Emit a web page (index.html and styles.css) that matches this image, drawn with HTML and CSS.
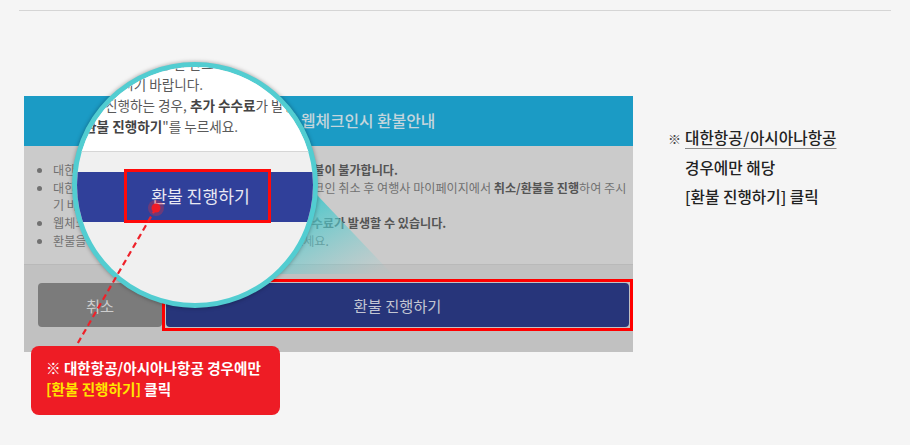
FILE: index.html
```html
<!DOCTYPE html>
<html>
    <head>
        <title>웹체크인시 환불안내</title>
        <link rel="stylesheet" href="styles.css">
    </head>

<body>
    <div class="topline"></div>
    <div class="main">
        <div class="stage">
            <div class="dialog">
                <div class="dlg-head">항공사 웹체크인시 환불안내</div>
                <div class="dlg-body">
                    <ul>
                        <li>대한항공/아시아나항공은 웹체크인 완료 이후에는 <b>환불이 불가합니다.</b></li>
                        <li>대한항공/아시아나항공 항공권은 반드시 항공사 웹체크인 취소 후 여행사 마이페이지에서 <b>취소/환불을 진행</b>하여 주시기 바랍니다.</li>
                        <li>웹체크인 취소 후 바로 환불을 진행하는 경우, <b>추가 수수료가 발생할 수 있습니다.</b></li>
                        <li>환불을 원하실 경우 하단의 "환불 진행하기"를 누르세요.</li>
                    </ul>
                </div>
                <div class="dlg-foot">
                    <button class="btn-cancel">취소</button>
                    <div class="refund-mark"><button class="btn-refund">환불 진행하기</button></div>
                </div>
            </div>

            <!-- 돋보기 그림자 -->
            <svg class="cone" width="400" height="200" viewBox="0 0 400 200">
                <defs>
                    <linearGradient id="coneGrad" x1="0.45" y1="0.15" x2="1" y2="0.9">
                        <stop offset="0" stop-color="#45c6ca" stop-opacity="0.95"/>
                        <stop offset="1" stop-color="#6fd0d2" stop-opacity="0.05"/>
                    </linearGradient>
                </defs>
                <polygon points="275,80 368,178 236,178" fill="url(#coneGrad)"/>
            </svg>

            <div class="lens">
                <div class="lens-top">
                    <div class="lz lz0"><span>환불 진행 전 반드시 웹체크인 여부를 확인</span></div>
                    <div class="lz lz1"><span>마이페이지에서 취소/환불을 진행하여 주시기 바랍니다.</span></div>
                    <div class="lz lz2"><span>진행하는 경우, <b>추가 수수료</b>가 발생할 수 있습니다.</span></div>
                    <div class="lz lz3"><span><b>환불 진행하기</b>"를 누르세요.</span></div>
                </div>
                <div class="lens-bottom">
                    <div class="lens-band">
                        <div class="lens-btn">환불 진행하기</div>
                    </div>
                </div>
            </div>

            <svg class="pointer" width="200" height="270" viewBox="0 0 200 270">
                <line x1="132" y1="112" x2="51" y2="252" stroke="#ee2129" stroke-width="2.2" stroke-dasharray="6 4"/>
                <circle cx="132" cy="112" r="8" fill="#e0303c" fill-opacity="0.35"/>
                <circle cx="132" cy="112" r="4.5" fill="#f01c26"/>
            </svg>

            <div class="callout">
                <p>※ 대한항공/아시아나항공 경우에만</p>
                <p><span class="hl">[환불 진행하기]</span> 클릭</p>
            </div>
        </div>

        <div class="note">
            <p><span class="mark">※</span><span class="ul">대한항공 / 아시아나항공</span></p>
            <p>경우에만 해당</p>
            <p>[환불 진행하기] 클릭</p>
        </div>
    </div>
</body>
</html>
```

FILE: styles.css
```css
body{
    margin: 0;
    background: #f5f5f5;
    font-family: "Noto Sans CJK KR", "Noto Sans", sans-serif;
}
.topline{
    margin: 10px 19px 0;
    border-top: 1px solid #d5d5d5;
}
.main{
    display: flex;
    align-items: flex-start;
    padding: 85px 0 0 24px;
}

/* 캡처된 팝업 */
.stage{
    position: relative;
    width: 609px;
    flex: none;
}
.dialog{
    width: 609px;
    height: 256px;
    display: flex;
    flex-direction: column;
    background: #cbcbcb;
}
.dlg-head{
    height: 50px;
    background: #1b9bc5;
    color: #c4d5dc;
    font-size: 15.8px;
    font-weight: 500;
    line-height: 50px;
    text-align: center;
    padding-left: 32px;
}
.dlg-body{
    height: 119px;
    padding: 15px 4px 0 0;
    box-sizing: border-box;
    border-bottom: 1px solid #b9b9b9;
}
.dlg-body ul{
    margin: 0;
    padding-left: 29px;
    font-size: 12.1px;
    line-height: 17.7px;
    color: #717171;
}
.dlg-body b{
    color: #545454;
}
.dlg-foot{
    flex: 1;
    display: flex;
    padding: 14px 0 0 14px;
    background: #c1c1c1;
}
.dlg-foot button{
    height: 44px;
    border: 0;
    border-radius: 4px;
    font-family: inherit;
    font-size: 15.3px;
}
.btn-cancel{
    width: 124px;
    margin-top: 4px;
    background: #7b7b7b;
    color: #cdcdcd;
}
.refund-mark{
    flex: 1;
    display: flex;
    height: 52px;
    box-sizing: border-box;
    padding: 1px;
    border: 3px solid #ff0000;
}
.btn-refund{
    flex: 1;
    background: #27357a;
    color: #c2c5d2;
}

/* 돋보기 */
.cone{
    position: absolute;
    left: 0;
    top: 0;
}
.lens{
    position: absolute;
    left: 48px;
    top: -34px;
    width: 246px;
    height: 246px;
    box-sizing: border-box;
    border: 5px solid #52cdd1;
    border-radius: 50%;
    overflow: hidden;
    background: #f0f0f0;
    box-shadow: 0 0 4px rgba(0, 0, 0, 0.35);
}
.lens-top{
    height: 84px;
    background: #fff;
    border-bottom: 1px solid #d6d6d6;
    overflow: hidden;
}
.lz{
    display: flex;
    white-space: nowrap;
    font-size: 13.6px;
    line-height: 21px;
    color: #5a5a5a;
}
.lz b{
    color: #444;
}
.lz0{
    margin-top: -14px;
    padding-left: 40px;
}
.lz1{
    justify-content: flex-end;
    padding-right: 110px;
}
.lz2{
    padding-left: 28px;
}
.lz3{
    justify-content: flex-end;
    padding-right: 75px;
}
.lens-bottom{
    padding-top: 20px;
}
.lens-band{
    height: 50px;
    background: #30409a;
}
.lens-btn{
    width: 147px;
    height: 54px;
    margin: 0 0 0 47px;
    padding-left: 6px;
    position: relative;
    top: -3px;
    box-sizing: border-box;
    border: 3px solid #ff0a0a;
    color: #e9e9f3;
    font-size: 17.2px;
    line-height: 48px;
    text-align: center;
}
.pointer{
    position: absolute;
    left: 0;
    top: 0;
}

/* 빨간 말풍선 */
.callout{
    position: relative;
    width: 249px;
    height: 69px;
    margin: -6px 0 0 7px;
    box-sizing: border-box;
    padding: 11px 0 0 15px;
    background: #ee1c25;
    border-radius: 8px;
    color: #fff;
    font-size: 14.6px;
    font-weight: bold;
    line-height: 21px;
}
.callout p{
    margin: 0;
}
.callout .hl{
    color: #ffe400;
}

/* 오른쪽 안내 */
.note{
    margin: 27px 0 0 35px;
    padding-left: 17px;
    font-size: 15.7px;
    font-weight: 500;
    line-height: 29px;
    color: #222;
}
.note p{
    margin: 0;
}
.note .mark{
    margin-left: -17px;
    width: 17px;
    display: inline-block;
    font-weight: normal;
    font-size: 13px;
    color: #444;
}
.note .ul{
    text-decoration: underline;
    text-decoration-color: #8a8a8a;
    text-underline-offset: 4px;
    word-spacing: -3px;
}
```
